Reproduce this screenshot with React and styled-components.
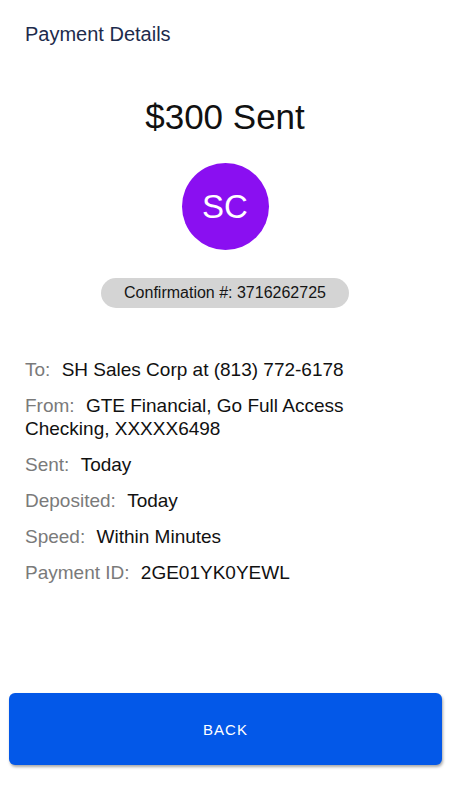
import React from "react";
import styled, { createGlobalStyle } from "styled-components";

const GlobalStyle = createGlobalStyle`
  body {
    margin: 0;
    background: #ffffff;
    font-family: "Liberation Sans", Arial, sans-serif;
  }
`;

const Screen = styled.div`
  min-height: 794px;
  display: flex;
  flex-direction: column;
  background: #ffffff;
`;

const Header = styled.h1`
  margin: 0;
  padding: 22px 25px 0;
  font-size: 20px;
  line-height: 24px;
  font-weight: 400;
  color: #1d2b4c;
`;

const Summary = styled.section`
  display: flex;
  flex-direction: column;
  align-items: center;
`;

const Amount = styled.div`
  margin-top: 51px;
  font-size: 35px;
  line-height: 40px;
  color: #111111;
`;

const Avatar = styled.div`
  margin-top: 26px;
  width: 87px;
  height: 87px;
  border-radius: 50%;
  background: #8a0ff1;
  color: #ffffff;
  display: flex;
  align-items: center;
  justify-content: center;
  font-size: 33px;
`;

const Pill = styled.div`
  margin-top: 28px;
  width: 248px;
  height: 30px;
  border-radius: 15px;
  background: #d4d4d4;
  display: flex;
  align-items: center;
  justify-content: center;
  font-size: 16px;
  color: #151515;
`;

const Details = styled.dl`
  margin: 50px 0 0;
  padding: 0 25px;
  display: flex;
  flex-direction: column;
  gap: 13px;
  flex: 1;
`;

const Row = styled.div`
  font-size: 19px;
  line-height: 23px;
  color: #111111;
`;

const Label = styled.dt`
  display: inline;
  color: #7a7a7a;
  margin-right: 6px;
`;

const Value = styled.dd`
  display: inline;
  margin: 0;
`;

const BackButton = styled.button`
  margin: 0 8px 29px 9px;
  height: 72px;
  border: none;
  border-radius: 6px;
  background: #0358e8;
  color: #ffffff;
  font-family: "Liberation Sans", Arial, sans-serif;
  font-size: 15px;
  letter-spacing: 1px;
  box-shadow: 1px 2px 3px rgba(0, 0, 0, 0.35);
  cursor: pointer;
`;

const rows = [
  ["To:", "SH Sales Corp at (813) 772-6178"],
  ["From:", "GTE Financial, Go Full Access Checking, XXXXX6498"],
  ["Sent:", "Today"],
  ["Deposited:", "Today"],
  ["Speed:", "Within Minutes"],
  ["Payment ID:", "2GE01YK0YEWL"],
];

const App = () => {
  return (
    <Screen>
      <GlobalStyle />
      <Header>Payment Details</Header>
      <Summary>
        <Amount>$300 Sent</Amount>
        <Avatar>SC</Avatar>
        <Pill>Confirmation #: 3716262725</Pill>
      </Summary>
      <Details>
        {rows.map(([label, value]) => (
          <Row key={label}>
            <Label>{label}</Label> <Value>{value}</Value>
          </Row>
        ))}
      </Details>
      <BackButton>BACK</BackButton>
    </Screen>
  );
};

export default App;
